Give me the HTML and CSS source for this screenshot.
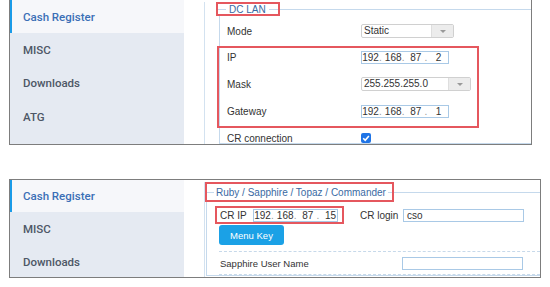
FILE: index.html
```html
<!DOCTYPE html>
<html>
<head>
<meta charset="utf-8">
<link rel="stylesheet" href="styles.css">
</head>
<body>
<div class="panel first">
  <nav class="side">
    <div class="item active">Cash Register</div>
    <div class="item">MISC</div>
    <div class="item">Downloads</div>
    <div class="item">ATG</div>
  </nav>
  <div class="content">
    <div class="inner">
      <fieldset class="fs">
        <legend class="lg"><span>DC LAN</span></legend>
        <div class="row pad">
          <span class="lbl">Mode</span>
          <div class="sel w93"><span class="val">Static</span><span class="arr"><i></i></span></div>
        </div>
        <div class="hl">
          <div class="row">
            <span class="lbl">IP</span>
            <div class="ip w88"><span class="oc">192</span><span class="dot">.</span><span class="oc">168</span><span class="dot">.</span><span class="oc">87</span><span class="dot">.</span><span class="oc">2</span></div>
          </div>
          <div class="row mask">
            <span class="lbl">Mask</span>
            <div class="sel w110"><span class="val">255.255.255.0</span><span class="arr"><i></i></span></div>
          </div>
          <div class="row gw">
            <span class="lbl">Gateway</span>
            <div class="ip w88"><span class="oc">192</span><span class="dot">.</span><span class="oc">168</span><span class="dot">.</span><span class="oc">87</span><span class="dot">.</span><span class="oc">1</span></div>
          </div>
        </div>
        <div class="row pad cr">
          <span class="lbl">CR connection</span>
          <span class="cb"><svg viewBox="0 0 10 10" width="10" height="10"><path d="M2.2 5.2 L4.2 7.2 L7.9 2.9" fill="none" stroke="#fff" stroke-width="1.6"/></svg></span>
        </div>
      </fieldset>
    </div>
  </div>
</div>

<div class="panel second">
  <nav class="side">
    <div class="item active">Cash Register</div>
    <div class="item">MISC</div>
    <div class="item">Downloads</div>
  </nav>
  <div class="content c2">
    <div class="inner i2">
      <fieldset class="fs fs2">
        <legend class="lg lg2"><span>Ruby / Sapphire / Topaz / Commander</span></legend>
        <div class="row r1">
          <div class="hl2">
            <span class="lbl2">CR IP</span>
            <div class="ip w85"><span class="oc">192</span><span class="dot">.</span><span class="oc">168</span><span class="dot">.</span><span class="oc">87</span><span class="dot">.</span><span class="oc">15</span></div>
          </div>
          <span class="lbl3">CR login</span>
          <div class="txt w121">cso</div>
        </div>
        <button class="btn">Menu Key</button>
        <div class="dash"></div>
        <div class="row r2">
          <span class="lbl4">Sapphire User Name</span>
          <div class="txt w121"></div>
        </div>
        <div class="dash d2"></div>
      </fieldset>
    </div>
  </div>
</div>
</body>
</html>
```

FILE: styles.css
```css
* { box-sizing: border-box; }
body {
  margin: 0;
  background: #fff;
  font-family: "Liberation Sans", Arial, sans-serif;
  font-size: 10px;
  color: #333;
}
.panel {
  display: flex;
  margin-left: 9px;
  border: 1px solid #7d7d7d;
  overflow: hidden;
}
.first {
  width: 523px;
  height: 145px;
  border-top: none;
}
.second {
  width: 532px;
  height: 99px;
  margin-top: 34px;
}
.side {
  width: 174px;
  flex: none;
  background: #e5eaf2;
}
.item {
  height: 33.3px;
  display: flex;
  align-items: center;
  padding-left: 13px;
  font-family: Roboto, "Liberation Sans", sans-serif;
  font-weight: 500;
  font-size: 11.5px;
  color: #4d5766;
}
.item.active {
  background: #f6f7fa;
  border-left: 2px solid #1a9be8;
  padding-left: 11px;
  color: #3b6fb6;
}
.second .item.active { height: 32px; }
.content {
  flex: 1;
  padding-left: 20px;
  background: #fff;
  min-width: 0;
}
.inner {
  height: 100%;
  border-left: 1px solid #d3e2f0;
  padding-left: 14px;
}
.fs {
  margin: 2px 0 0 0;
  padding: 8px 0 0 0;
  border: 1px solid #c5d9ec;
  border-right: none;
  min-width: 0;
}
.lg {
  display: flex;
  align-items: center;
  width: 64px;
  height: 14px;
  margin-left: -4px;
  padding: 0;
  border: 2px solid #e5575e;
  color: #3a6aa3;
  font-size: 10px;
}
.lg::before {
  content: "";
  width: 8px;
  height: 1px;
  margin-right: 3px;
  background: #c5d9ec;
}
.lg::after {
  content: "";
  flex: 1;
  height: 1px;
  margin-left: 3px;
  background: #c5d9ec;
}
.row {
  display: flex;
  align-items: center;
}
.pad { padding-left: 7px; height: 14px; }
.lbl { width: 134px; flex: none; }
.hl {
  width: 262px;
  margin: 8px 0 0 -3px;
  padding: 3px 0 8px 8px;
  border: 2px solid #e5575e;
}
.hl .row { height: 13px; }
.hl .mask { height: 14px; margin-top: 13px; }
.hl .gw { margin-top: 14px; }
.cr { margin-top: 5px; height: 10px; }
.sel {
  display: flex;
  height: 14px;
  border: 1px solid #d0d0d0;
  border-radius: 2px;
  overflow: hidden;
}
.w93 { width: 93px; }
.w110 { width: 110px; }
.val {
  flex: 1;
  padding-left: 2px;
  line-height: 12px;
  color: #333;
}
.arr {
  width: 22px;
  flex: none;
  background: #ececec;
  border-left: 1px solid #dedede;
  display: flex;
  align-items: center;
  justify-content: center;
}
.arr i {
  width: 0;
  height: 0;
  border-left: 3px solid transparent;
  border-right: 3px solid transparent;
  border-top: 3px solid #999;
}
.ip {
  display: flex;
  height: 13px;
  border: 1px solid #a9c9e6;
  line-height: 11px;
  color: #333;
}
.w88 { width: 88px; }
.w85 { width: 85px; }
.oc { width: 17px; text-align: center; flex: none; }
.dot { width: 5.7px; flex: none; color: #999; text-align: left; }
.cb {
  width: 10px;
  height: 10px;
  border-radius: 2px;
  background: #1f74e6;
  display: flex;
}
/* second panel */
.i2 { padding-left: 1px; }
.fs2 { padding-top: 4px; }
.lg2 {
  width: 189px;
  height: 20px;
  margin-left: -2px;
}
.lg2::before { width: 7px; margin-right: 2px; }
.lg2::after { margin-left: 2px; }
.r1 { height: 18px; }
.hl2 {
  display: flex;
  align-items: center;
  height: 18px;
  margin-left: 8px;
  padding: 0 4px 0 3px;
  border: 2px solid #e5575e;
}
.lbl2 { width: 33px; flex: none; }
.lbl3 { width: 43px; margin-left: 16px; flex: none; }
.txt {
  height: 13px;
  border: 1px solid #a9c9e6;
  padding-left: 3px;
  line-height: 11px;
}
.w121 { width: 121px; }
.btn {
  display: block;
  margin: 1px 0 0 12px;
  width: 65px;
  height: 20px;
  padding: 0;
  border: none;
  border-radius: 3px;
  background: #1ba1e6;
  color: #fff;
  font-family: "Liberation Sans", Arial, sans-serif;
  font-size: 9.5px;
}
.dash {
  margin: 6px 0 0 12px;
  border-top: 1px dashed #c7d9ea;
}
.r2 { padding: 5px 0 0 13px; }
.lbl4 { width: 182px; flex: none; font-size: 9.5px; }
.d2 { margin-top: 4px; }
```
